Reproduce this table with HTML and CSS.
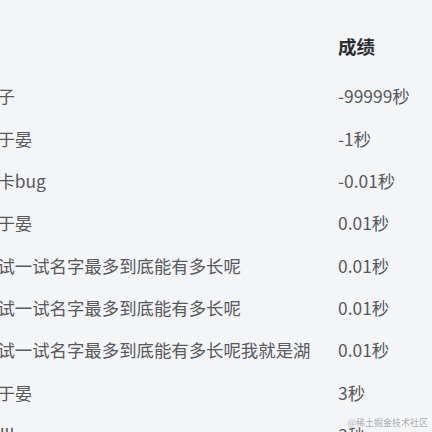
FILE: index.html
```html
<!DOCTYPE html>
<html lang="zh-CN">
<head>
<meta charset="utf-8">
<link rel="stylesheet" href="styles.css">
</head>
<body>
<div class="page">
  <div class="table">
    <div class="row head"><div class="c1">名</div><div class="c2">成绩</div></div>
    <div class="row"><div class="c1">橘子</div><div class="c2">-99999秒</div></div>
    <div class="row"><div class="c1">彭于晏</div><div class="c2">-1秒</div></div>
    <div class="row"><div class="c1">会卡bug</div><div class="c2">-0.01秒</div></div>
    <div class="row"><div class="c1">彭于晏</div><div class="c2">0.01秒</div></div>
    <div class="row"><div class="c1">测试一试名字最多到底能有多长呢</div><div class="c2">0.01秒</div></div>
    <div class="row"><div class="c1">测试一试名字最多到底能有多长呢</div><div class="c2">0.01秒</div></div>
    <div class="row"><div class="c1">测试一试名字最多到底能有多长呢我就是湖</div><div class="c2">0.01秒</div></div>
    <div class="row"><div class="c1">彭于晏</div><div class="c2">3秒</div></div>
    <div class="row"><div class="c1">llallb</div><div class="c2">3秒</div></div>
  </div>
  <div class="watermark">@稀土掘金技术社区</div>
</div>
</body>
</html>
```
FILE: styles.css
```css
html, body {
  margin: 0;
  padding: 0;
  background: #f4f5f7;
  overflow: hidden;
}
.page {
  width: 432px;
  height: 432px;
  overflow: hidden;
  position: relative;
  font-family: "Noto Sans CJK SC", "Noto Sans", sans-serif;
}
.table {
  margin-left: -20px;
  padding-top: 25px;
  display: flex;
  flex-direction: column;
}
.row {
  display: grid;
  grid-template-columns: 358px auto;
  height: 42.3px;
  align-items: center;
  font-size: 17.4px;
  color: #58595c;
  white-space: nowrap;
}
.row.head {
  height: 42.3px;
  margin-bottom: 8.2px;
  font-weight: 700;
  font-size: 18.5px;
  color: #2b2d30;
}
.c1, .c2 {
  line-height: 42.3px;
}
.watermark {
  position: absolute;
  right: 4px;
  top: 416px;
  font-size: 9px;
  line-height: 14px;
  color: rgba(150, 153, 160, 0.8);
  font-family: "Noto Sans CJK SC", serif;
}
```
